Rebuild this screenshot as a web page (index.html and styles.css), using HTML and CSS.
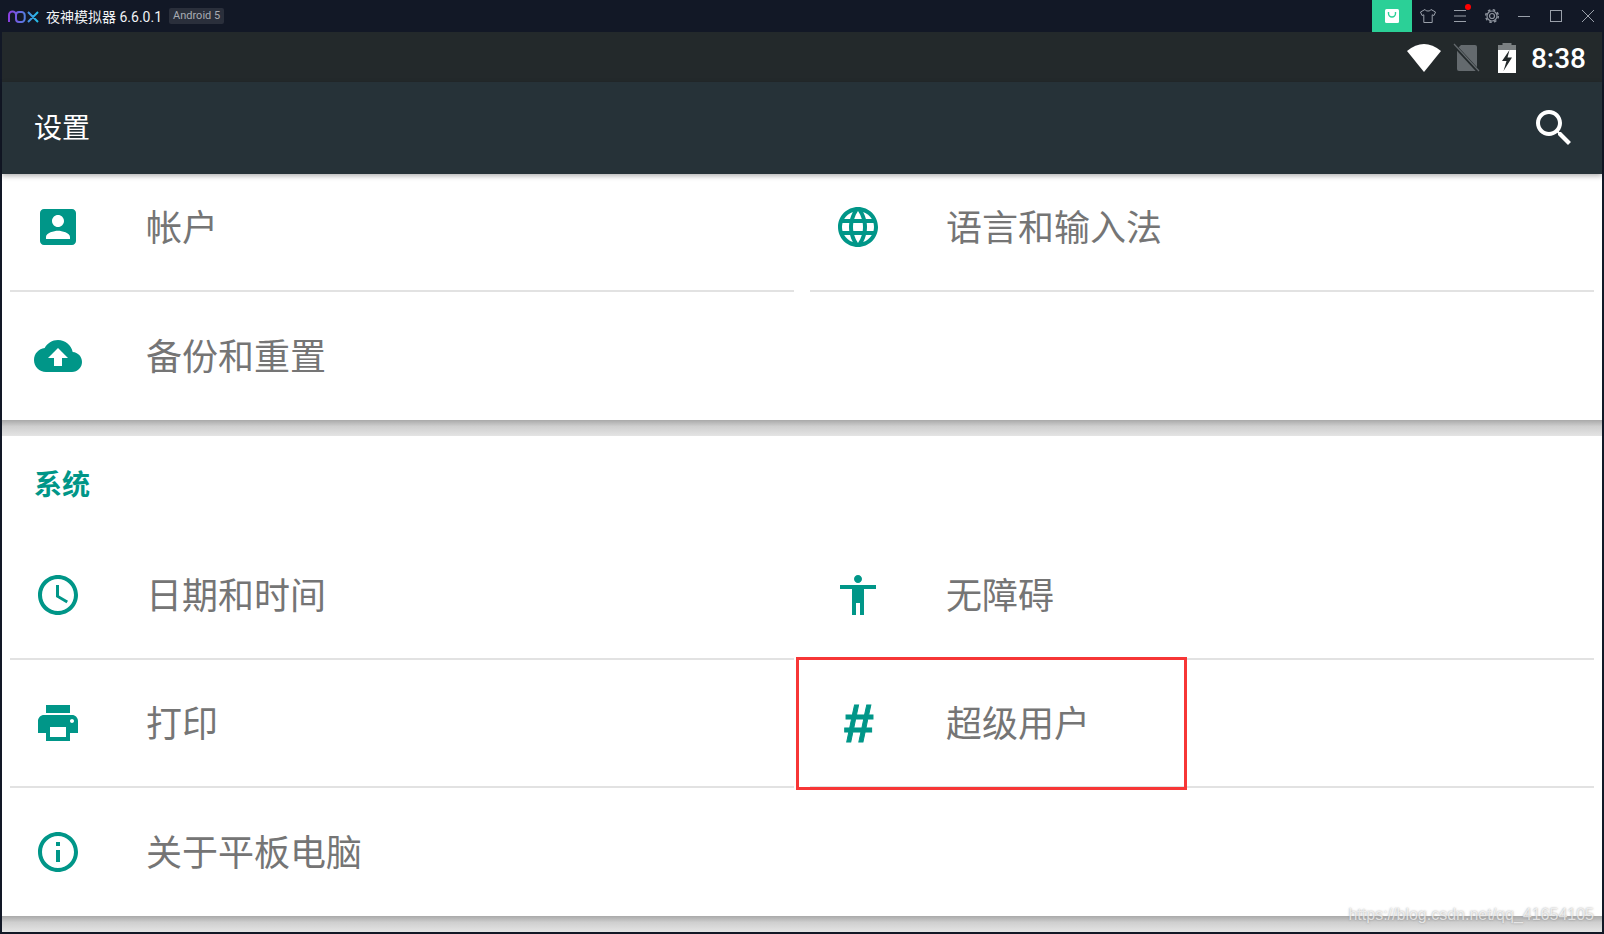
FILE: index.html
```html
<!DOCTYPE html>
<html lang="zh-CN">
<head>
    <meta charset="UTF-8">
    <title>夜神模拟器</title>
    <link rel="stylesheet" href="styles.css">
</head>
<body>
    <div class="titlebar">
        <svg class="nox-logo" width="32" height="14" viewBox="0 0 32 14">
            <defs>
                <linearGradient id="noxGrad" x1="0" x2="1" y1="0" y2="0">
                    <stop offset="0" stop-color="#8a3fe0"/>
                    <stop offset="0.5" stop-color="#5a78e0"/>
                    <stop offset="1" stop-color="#22c0e8"/>
                </linearGradient>
            </defs>
            <path d="M1 12V5a3.500 3.500 0 0 1 7 0v4a3 3 0 0 0 3 3h2.500a3.200 3.200 0 0 0 3.200-3.200V5.200A3.200 3.200 0 0 0 13.500 2H11a3 3 0 0 0-3 3M20 2l10 10M30 2L20 12" fill="none" stroke="url(#noxGrad)" stroke-width="2"/>
        </svg>
        <span class="app-name">夜神模拟器 6.6.0.1</span>
        <span class="android-tag">Android 5</span>
        <div class="window-btns">
            <div class="store-btn">
                <svg width="16" height="16" viewBox="0 0 16 16">
                    <rect x="1" y="1" width="14" height="14" rx="1.500" fill="#fff"/>
                    <path d="M4.500 4v1.500a3.500 3.500 0 0 0 7 0V4" fill="none" stroke="#2bd097" stroke-width="1.400"/>
                </svg>
            </div>
            <div class="win-btn">
                <svg width="18" height="16" viewBox="0 0 18 16" fill="none" stroke="#9aa0aa" stroke-width="1">
                    <path d="M6 1.500L1.500 4l1.500 3.500 1.800-.7V14.500h8.400V6.800l1.800.7L16.500 4 12 1.500c-.5 2-5.500 2-6 0z"/>
                </svg>
            </div>
            <div class="win-btn menu-btn">
                <svg width="14" height="14" viewBox="0 0 14 14" stroke="#9aa0aa" stroke-width="1">
                    <path d="M1 1.500h12M1 7h12M1 12.500h12"/>
                </svg>
                <span class="red-dot"></span>
            </div>
            <div class="win-btn">
                <svg width="16" height="16" viewBox="0 0 16 16" fill="none" stroke="#8f959f">
                    <circle cx="8" cy="8" r="2.500" stroke-width="1.200"/>
                    <circle cx="8" cy="8" r="5" stroke-width="1.200"/>
                    <circle cx="8" cy="8" r="6.300" stroke-width="1.500" stroke-dasharray="2.500 2.450"/>
                </svg>
            </div>
            <div class="win-btn">
                <svg width="14" height="14" viewBox="0 0 14 14" stroke="#9aa0aa" stroke-width="1">
                    <path d="M1 7.500h12"/>
                </svg>
            </div>
            <div class="win-btn">
                <svg width="14" height="14" viewBox="0 0 14 14" fill="none" stroke="#9aa0aa" stroke-width="1">
                    <rect x="1.500" y="1.500" width="11" height="11"/>
                </svg>
            </div>
            <div class="win-btn">
                <svg width="14" height="14" viewBox="0 0 14 14" stroke="#9aa0aa" stroke-width="1">
                    <path d="M1 1l12 12M13 1L1 13"/>
                </svg>
            </div>
        </div>
    </div>

    <div class="android">
        <div class="statusbar">
            <svg class="st-wifi" width="36" height="30" viewBox="0 0 36 30">
                <path d="M1 8Q18-6 35 8L18 29z" fill="#fff"/>
            </svg>
            <svg class="st-sim" width="28" height="30" viewBox="0 0 28 30">
                <path d="M8 2h14a2 2 0 0 1 2 2v22a2 2 0 0 1-2 2H6a2 2 0 0 1-2-2V6z" fill="#646a6e"/>
                <path d="M1 2l25 27" stroke="#23292b" stroke-width="3.500"/>
                <path d="M1 1l25 27" stroke="#646a6e" stroke-width="1.200"/>
            </svg>
            <svg class="st-batt" width="20" height="30" viewBox="0 0 20 30">
                <path d="M5.500 0h9v2H19v6H1V2h4.500z" fill="#7b8082"/>
                <path d="M1 7h18v23H1z" fill="#fff"/>
                <path d="M12.500 7L5 18h4.500L6.500 28 15 14.500h-4.500z" fill="#23292b"/>
            </svg>
            <span class="st-time">8:38</span>
        </div>
        <div class="appbar">
            <span class="appbar-title">设置</span>
            <svg width="48" height="48" viewBox="0 0 24 24" fill="#fff">
                <path d="M15.500 14h-.79l-.28-.27C15.410 12.590 16 11.110 16 9.500 16 5.910 13.090 3 9.500 3S3 5.910 3 9.500 5.910 16 9.500 16c1.610 0 3.090-.59 4.230-1.570l.27.28v.79l5 4.990L20.490 19l-4.990-5zm-6 0C7.010 14 5 11.990 5 9.500S7.010 5 9.500 5 14 7.010 14 9.500 11.990 14 9.500 14z"/>
            </svg>
        </div>

        <section class="card card-top">
            <div class="grid grid-scrolled">
                <div class="item">
                    <svg class="ico" viewBox="0 0 24 24"><path d="M3 5v14c0 1.100.89 2 2 2h14c1.100 0 2-.9 2-2V5c0-1.100-.9-2-2-2H5c-1.110 0-2 .9-2 2zm12 4c0 1.660-1.340 3-3 3s-3-1.340-3-3 1.340-3 3-3 3 1.340 3 3zm-9 8c0-2 4-3.100 6-3.100s6 1.100 6 3.100v1H6v-1z"/></svg>
                    <span class="label">帐户</span>
                </div>
                <div class="item">
                    <svg class="ico" viewBox="0 0 24 24"><path d="M11.990 2C6.470 2 2 6.480 2 12s4.470 10 9.990 10C17.520 22 22 17.520 22 12S17.520 2 11.990 2zm6.930 6h-2.950c-.32-1.250-.78-2.450-1.380-3.560 1.840.63 3.370 1.910 4.330 3.560zM12 4.040c.83 1.200 1.480 2.530 1.910 3.960h-3.820c.43-1.430 1.080-2.760 1.910-3.960zM4.260 14C4.100 13.360 4 12.690 4 12s.1-1.360.26-2h3.380c-.08.66-.14 1.320-.14 2 0 .68.06 1.340.14 2H4.260zm.82 2h2.950c.32 1.250.78 2.450 1.380 3.560-1.840-.63-3.370-1.900-4.330-3.560zm2.950-8H5.080c.96-1.660 2.490-2.930 4.330-3.560C8.810 5.550 8.350 6.750 8.030 8zM12 19.960c-.83-1.200-1.480-2.530-1.910-3.960h3.820c-.43 1.430-1.080 2.760-1.910 3.960zM14.340 14H9.660c-.09-.66-.16-1.320-.16-2 0-.68.07-1.350.16-2h4.680c.09.650.16 1.320.16 2 0 .68-.07 1.340-.16 2zm.25 5.560c.6-1.110 1.060-2.310 1.380-3.560h2.950c-.96 1.650-2.490 2.930-4.330 3.560zM16.360 14c.08-.66.14-1.320.14-2 0-.68-.06-1.340-.14-2h3.380c.16.640.26 1.310.26 2s-.1 1.360-.26 2h-3.380z"/></svg>
                    <span class="label">语言和输入法</span>
                </div>
                <div class="item item-last">
                    <svg class="ico" viewBox="0 0 24 24"><path d="M19.350 10.040C18.670 6.590 15.640 4 12 4 9.110 4 6.600 5.640 5.350 8.040 2.340 8.360 0 10.910 0 14c0 3.310 2.690 6 6 6h13c2.760 0 5-2.240 5-5 0-2.640-2.050-4.780-4.650-4.960zM14 13v4h-4v-4H7l5-5 5 5h-3z"/></svg>
                    <span class="label">备份和重置</span>
                </div>
            </div>
        </section>
        <div class="card-gap"></div>

        <section class="card">
            <h2 class="card-title">系统</h2>
            <div class="grid">
                <div class="item">
                    <svg class="ico" viewBox="0 0 24 24"><path d="M11.990 2C6.470 2 2 6.480 2 12s4.470 10 9.990 10C17.520 22 22 17.520 22 12S17.520 2 11.990 2zM12 20c-4.420 0-8-3.580-8-8s3.580-8 8-8 8 3.580 8 8-3.580 8-8 8zm.5-13H11v6l5.250 3.150.75-1.230-4.500-2.670z"/></svg>
                    <span class="label">日期和时间</span>
                </div>
                <div class="item">
                    <svg class="ico" viewBox="0 0 24 24"><path d="M12 2c1.100 0 2 .9 2 2s-.9 2-2 2-2-.9-2-2 .9-2 2-2zm9 7h-6v13h-2v-6h-2v6H9V9H3V7h18v2z"/></svg>
                    <span class="label">无障碍</span>
                </div>
                <div class="item">
                    <svg class="ico" viewBox="0 0 24 24"><path d="M19 8H5c-1.660 0-3 1.340-3 3v6h4v4h12v-4h4v-6c0-1.660-1.340-3-3-3zm-3 11H8v-5h8v5zm3-7c-.55 0-1-.45-1-1s.45-1 1-1 1 .45 1 1-.45 1-1 1zm-1-9H6v4h12V3z"/></svg>
                    <span class="label">打印</span>
                </div>
                <div class="item">
                    <span class="ico ico-hash">#</span>
                    <span class="label">超级用户</span>
                </div>
                <div class="item item-last">
                    <svg class="ico" viewBox="0 0 24 24"><path d="M11 17h2v-6h-2v6zm1-15C6.480 2 2 6.480 2 12s4.480 10 10 10 10-4.480 10-10S17.520 2 12 2zm0 18c-4.410 0-8-3.590-8-8s3.590-8 8-8 8 3.590 8 8-3.590 8-8 8zM11 9h2V7h-2v2z"/></svg>
                    <span class="label">关于平板电脑</span>
                </div>
            </div>
        </section>
        <div class="card-gap"></div>
    </div>

    <!-- red mark and blog watermark sit on top of the screenshot -->
    <div class="red-box"></div>
    <div class="watermark">https://blog.csdn.net/qq_41654105</div>
</body>
</html>
```

FILE: styles.css
```css
* {
    box-sizing: border-box;
}
html, body {
    height: 100%;
}
body {
    margin: 0;
    background-color: #121826;
    font-family: "Noto Sans CJK SC", "Noto Sans", sans-serif;
    overflow: hidden;
    position: relative;
}
.titlebar {
    height: 32px;
    display: flex;
    align-items: center;
    padding-left: 8px;
    color: #f0f2f5;
}
.nox-logo {
    margin-right: 6px;
    margin-top: 1px;
}
.app-name {
    font-family: Roboto, "Noto Sans CJK SC", sans-serif;
    font-size: 14px;
    margin-right: 7px;
}
.android-tag {
    background-color: #2a2f3b;
    color: #a8acb3;
    font-family: Roboto, sans-serif;
    font-size: 11px;
    line-height: 16px;
    padding: 0 4px;
    border-radius: 2px;
}
.window-btns {
    margin-left: auto;
    display: flex;
    height: 32px;
}
.store-btn {
    width: 40px;
    background-color: #2bd097;
    display: flex;
    align-items: center;
    justify-content: center;
}
.win-btn {
    width: 32px;
    display: flex;
    align-items: center;
    justify-content: center;
    position: relative;
}
.red-dot {
    position: absolute;
    top: 4px;
    right: 5px;
    width: 6px;
    height: 6px;
    border-radius: 50%;
    background-color: #f00;
}
.android {
    margin: 0 2px;
    height: 900px;
    background-color: #fff;
}
.statusbar {
    height: 50px;
    background-color: #23292b;
    display: flex;
    align-items: center;
    justify-content: flex-end;
    padding-right: 16px;
}
.statusbar svg {
    margin-top: 2px;
}
.st-wifi {
    margin-right: 11px;
}
.st-sim {
    margin-right: 16px;
}
.st-batt {
    margin-right: 14px;
}
.st-time {
    color: #fff;
    font-family: Roboto, sans-serif;
    font-weight: 500;
    font-size: 28px;
    margin-top: 3px;
}
.appbar {
    height: 92px;
    background-color: #263238;
    display: flex;
    align-items: center;
    justify-content: space-between;
    padding: 0 24px 0 32px;
    color: #fff;
    font-size: 28px;
    position: relative;
    z-index: 2;
    box-shadow: 0 2px 5px rgba(0, 0, 0, 0.3);
}
.appbar-title {
    margin-bottom: 4px;
}
.card {
    background-color: #fff;
    overflow: hidden;
}
.card-top {
    height: 246px;
}
.card-gap {
    height: 16px;
    background: linear-gradient(#a9a9a9, #cfcfcf 40%, #e4e4e4);
}
.card-title {
    margin: 0;
    height: 96px;
    padding: 29px 0 0 32px;
    font-size: 28px;
    line-height: 36px;
    font-weight: 700;
    color: #009688;
}
.grid {
    display: grid;
    grid-template-columns: 784px 784px;
    column-gap: 16px;
    padding: 0 8px;
}
.grid-scrolled {
    margin-top: -10px;
}
.item {
    height: 128px;
    display: flex;
    align-items: center;
    border-bottom: 2px solid #e2e2e2;
    padding-left: 24px;
}
.item-last {
    border-bottom: none;
}
.ico {
    width: 48px;
    height: 48px;
    fill: #009688;
    flex-shrink: 0;
}
.ico-hash {
    color: #009688;
    font-family: "Liberation Sans", sans-serif;
    font-weight: 700;
    font-style: italic;
    font-size: 54px;
    line-height: 48px;
    text-align: center;
    -webkit-text-stroke: 1px #009688;
}
.label {
    margin-left: 64px;
    margin-bottom: 4px;
    font-size: 36px;
    color: #757575;
}
.red-box {
    position: absolute;
    left: 796px;
    top: 657px;
    width: 391px;
    height: 133px;
    border: 3px solid #f73636;
}
.watermark {
    position: absolute;
    right: 10px;
    top: 905px;
    font-family: "Liberation Sans", sans-serif;
    font-size: 16px;
    line-height: 20px;
    color: rgba(255, 255, 255, 0.7);
    text-shadow: 0 0 2px rgba(130, 130, 130, 0.8);
}
```
